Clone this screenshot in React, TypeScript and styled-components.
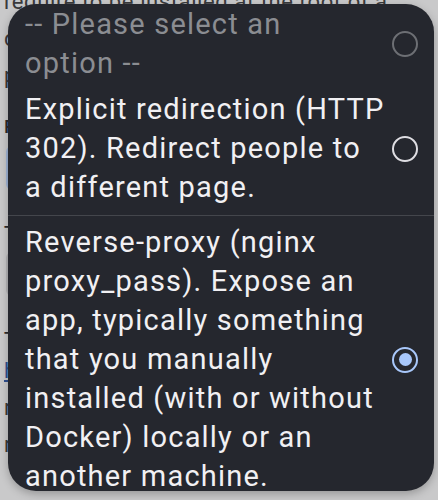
import styled, { createGlobalStyle } from "styled-components";

const GlobalStyle = createGlobalStyle`
  html, body {
    margin: 0;
    padding: 0;
    background: #c9c9ca;
  }
  * {
    box-sizing: border-box;
  }
`;

type Option = {
  label: string;
  placeholder?: boolean;
  selected?: boolean;
};

// the placeholder keeps "option --" together, as in the native picker
const options: Option[] = [
  { label: "-- Please select an option\u00a0--", placeholder: true },
  {
    label: "Explicit redirection (HTTP 302). Redirect people to a different page.",
  },
  {
    label:
      "Reverse-proxy (nginx proxy_pass). Expose an app, typically something that you manually installed (with or without Docker) locally or an another machine.",
    selected: true,
  },
];

const App = () => {
  return (
    <Screen>
      <GlobalStyle />
      <Page>
        <Para>require to be installed at the root of a</Para>
        <Para>domain or subdomain so you will need to</Para>
        <Para>provide one below.</Para>
        <Label>Redirection type</Label>
        <Field $focused />
        <Label>Target</Label>
        <Field />
        <Label>The documentation is available at</Label>
        <Link>https://example.org/docs</Link>
        <Para>reverse proxy setups and examples</Para>
        <Para>redirect rules and more details</Para>
      </Page>
      <Sheet>
        {options.map((opt, i) => (
          <OptionRow
            key={i}
            $divider={i === 1}
            $top={i === 0 ? 1 : i === 1 ? 4 : 7}
            $bottom={i === 1 ? 8 : 3}
          >
            <OptionText $muted={opt.placeholder}>{opt.label}</OptionText>
            <Radio $muted={opt.placeholder} $selected={opt.selected}>
              {opt.selected && <Dot />}
            </Radio>
          </OptionRow>
        ))}
      </Sheet>
    </Screen>
  );
};

export default App;

const Screen = styled.div`
  position: relative;
  width: 438px;
  height: 500px;
  overflow: hidden;
  background: #c9c9ca;
  font-family: Roboto, "Noto Sans", sans-serif;
`;

const Page = styled.div`
  display: flex;
  flex-direction: column;
  padding: 0 0 0 4px;
  margin-top: -17px;
`;

const Para = styled.div`
  font-size: 22px;
  line-height: 37px;
  letter-spacing: 0.6px;
  color: #3a3a3c;
  white-space: nowrap;
`;

const Label = styled.div`
  margin-top: 20px;
  font-size: 19px;
  font-weight: 500;
  line-height: 26px;
  color: #2a2a2c;
`;

const Field = styled.div<{ $focused?: boolean }>`
  height: 44px;
  margin: 6px 0 10px 2px;
  width: 420px;
  border-radius: 6px;
  border: 2px solid ${(p) => (p.$focused ? "#9fb4d6" : "#b4b4b6")};
  background: #d2d2d3;
`;

const Link = styled.div`
  font-size: 22px;
  line-height: 37px;
  color: #2f4f8f;
  text-decoration: underline;
`;

const Sheet = styled.div`
  position: absolute;
  left: 8px;
  top: 4px;
  width: 426px;
  height: 487px;
  border-radius: 28px;
  background: #25272e;
  overflow: hidden;
  box-shadow: 0 3px 8px rgba(0, 0, 0, 0.25);
`;

const OptionRow = styled.div<{ $divider?: boolean; $top: number; $bottom: number }>`
  display: flex;
  align-items: center;
  gap: 6px;
  padding: ${(p) => p.$top}px 16px ${(p) => p.$bottom}px 17px;
  border-bottom: ${(p) => (p.$divider ? "1px solid #44464c" : "none")};
`;

const OptionText = styled.div<{ $muted?: boolean }>`
  flex: 1;
  font-size: 29px;
  line-height: 39px;
  letter-spacing: 1.2px;
  color: ${(p) => (p.$muted ? "#8b8d92" : "#f1f0f3")};
`;

const Radio = styled.div<{ $muted?: boolean; $selected?: boolean }>`
  flex: none;
  width: 26px;
  height: 26px;
  border-radius: 50%;
  display: flex;
  align-items: center;
  justify-content: center;
  border: 2.5px solid
    ${(p) => (p.$selected ? "#a8c7fa" : p.$muted ? "#6d6f74" : "#dedde2")};
`;

const Dot = styled.div`
  width: 13px;
  height: 13px;
  border-radius: 50%;
  background: #a8c7fa;
`;
